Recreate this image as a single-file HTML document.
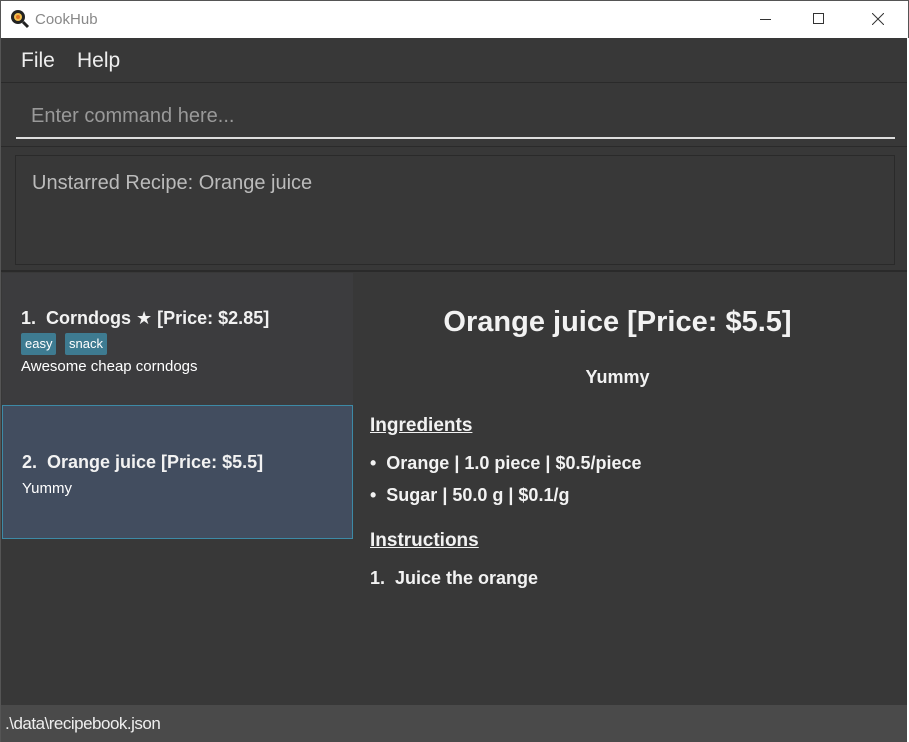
<!DOCTYPE html>
<html><head><style>
*{margin:0;padding:0;box-sizing:border-box}
body{width:909px;height:742px;background:#fff;font-family:"Liberation Sans","DejaVu Sans",sans-serif;position:relative;overflow:hidden}
.abs{position:absolute}
.t{color:#f2f2f2;font-weight:bold}
</style></head><body>
<div class="abs" style="left:0;top:0;width:909px;height:38px;background:#fff;border:1px solid #555;border-bottom:none"></div>
<svg class="abs" style="left:10px;top:9px" width="20" height="20"><circle cx="8" cy="8" r="7" fill="#222"/><circle cx="8" cy="8" r="4" fill="#f0c050"/><circle cx="8" cy="8" r="2" fill="#e07020"/><line x1="13" y1="13" x2="18" y2="18" stroke="#222" stroke-width="3"/></svg>
<div class="abs" style="left:35px;top:11px;font-size:15px;color:#888">CookHub</div>
<div class="abs" style="left:760px;top:19px;width:11px;height:1px;background:#333"></div>
<div class="abs" style="left:813px;top:13px;width:11px;height:11px;border:1px solid #333"></div>
<svg class="abs" style="left:872px;top:13px" width="12" height="12"><path d="M0 0L12 12M12 0L0 12" stroke="#333" stroke-width="1"/></svg>
<div class="abs" style="left:0;top:38px;width:907px;height:704px;background:#383838;border-left:1px solid #555"></div>
<div class="abs" style="left:21px;top:49px;font-size:21px;color:#eee">File</div>
<div class="abs" style="left:77px;top:49px;font-size:21px;color:#eee">Help</div>
<div class="abs" style="left:1px;top:82px;width:906px;height:1px;background:#2a2a2a"></div>
<div class="abs" style="left:31px;top:105px;font-size:20px;color:#999">Enter command here...</div>
<div class="abs" style="left:16px;top:137px;width:879px;height:2px;background:#ddd"></div>
<div class="abs" style="left:1px;top:146px;width:906px;height:1px;background:#2a2a2a"></div>
<div class="abs" style="left:15px;top:155px;width:880px;height:110px;border:1px solid #2a2a2a"></div>
<div class="abs" style="left:32px;top:172px;font-size:20px;color:#bbb">Unstarred Recipe: Orange juice</div>
<div class="abs" style="left:1px;top:270px;width:906px;height:2px;background:#2a2a2a"></div>
<div class="abs" style="left:2px;top:273px;width:352px;height:432px;background:#383838"></div>
<div class="abs" style="left:2px;top:273px;width:351px;height:132px;background:#3c3c3e"></div>
<div class="abs t" style="left:21px;top:308px;font-size:18px">1.&nbsp; Corndogs ★ [Price: $2.85]</div>
<div class="abs" style="left:21px;top:333px;height:22px;padding:3px 4px;background:#3e7b91;color:#fff;font-size:13px;border-radius:2px">easy</div>
<div class="abs" style="left:65px;top:333px;height:22px;padding:3px 4px;background:#3e7b91;color:#fff;font-size:13px;border-radius:2px">snack</div>
<div class="abs" style="left:21px;top:358px;font-size:15px;color:#fff">Awesome cheap corndogs</div>
<div class="abs" style="left:2px;top:405px;width:351px;height:134px;background:#424d5f;border:1px solid #3d8aa6"></div>
<div class="abs t" style="left:22px;top:452px;font-size:18px">2.&nbsp; Orange juice [Price: $5.5]</div>
<div class="abs" style="left:22px;top:480px;font-size:15px;color:#fff">Yummy</div>
<div class="abs t" style="left:354px;top:306px;width:527px;text-align:center;font-size:29px">Orange juice [Price: $5.5]</div>
<div class="abs t" style="left:354px;top:367px;width:527px;text-align:center;font-size:18px">Yummy</div>
<div class="abs t" style="left:370px;top:415px;font-size:19px;text-decoration:underline">Ingredients</div>
<div class="abs t" style="left:370px;top:453px;font-size:18px">•&nbsp; Orange | 1.0 piece | $0.5/piece</div>
<div class="abs t" style="left:370px;top:485px;font-size:18px">•&nbsp; Sugar | 50.0 g | $0.1/g</div>
<div class="abs t" style="left:370px;top:530px;font-size:19px;text-decoration:underline">Instructions</div>
<div class="abs t" style="left:370px;top:568px;font-size:18px">1.&nbsp; Juice the orange</div>
<div class="abs" style="left:1px;top:705px;width:906px;height:37px;background:#4a4a4a"></div>
<div class="abs" style="left:5px;top:714px;font-size:17px;color:#eee;letter-spacing:-0.5px">.\data\recipebook.json</div>
</body></html>
